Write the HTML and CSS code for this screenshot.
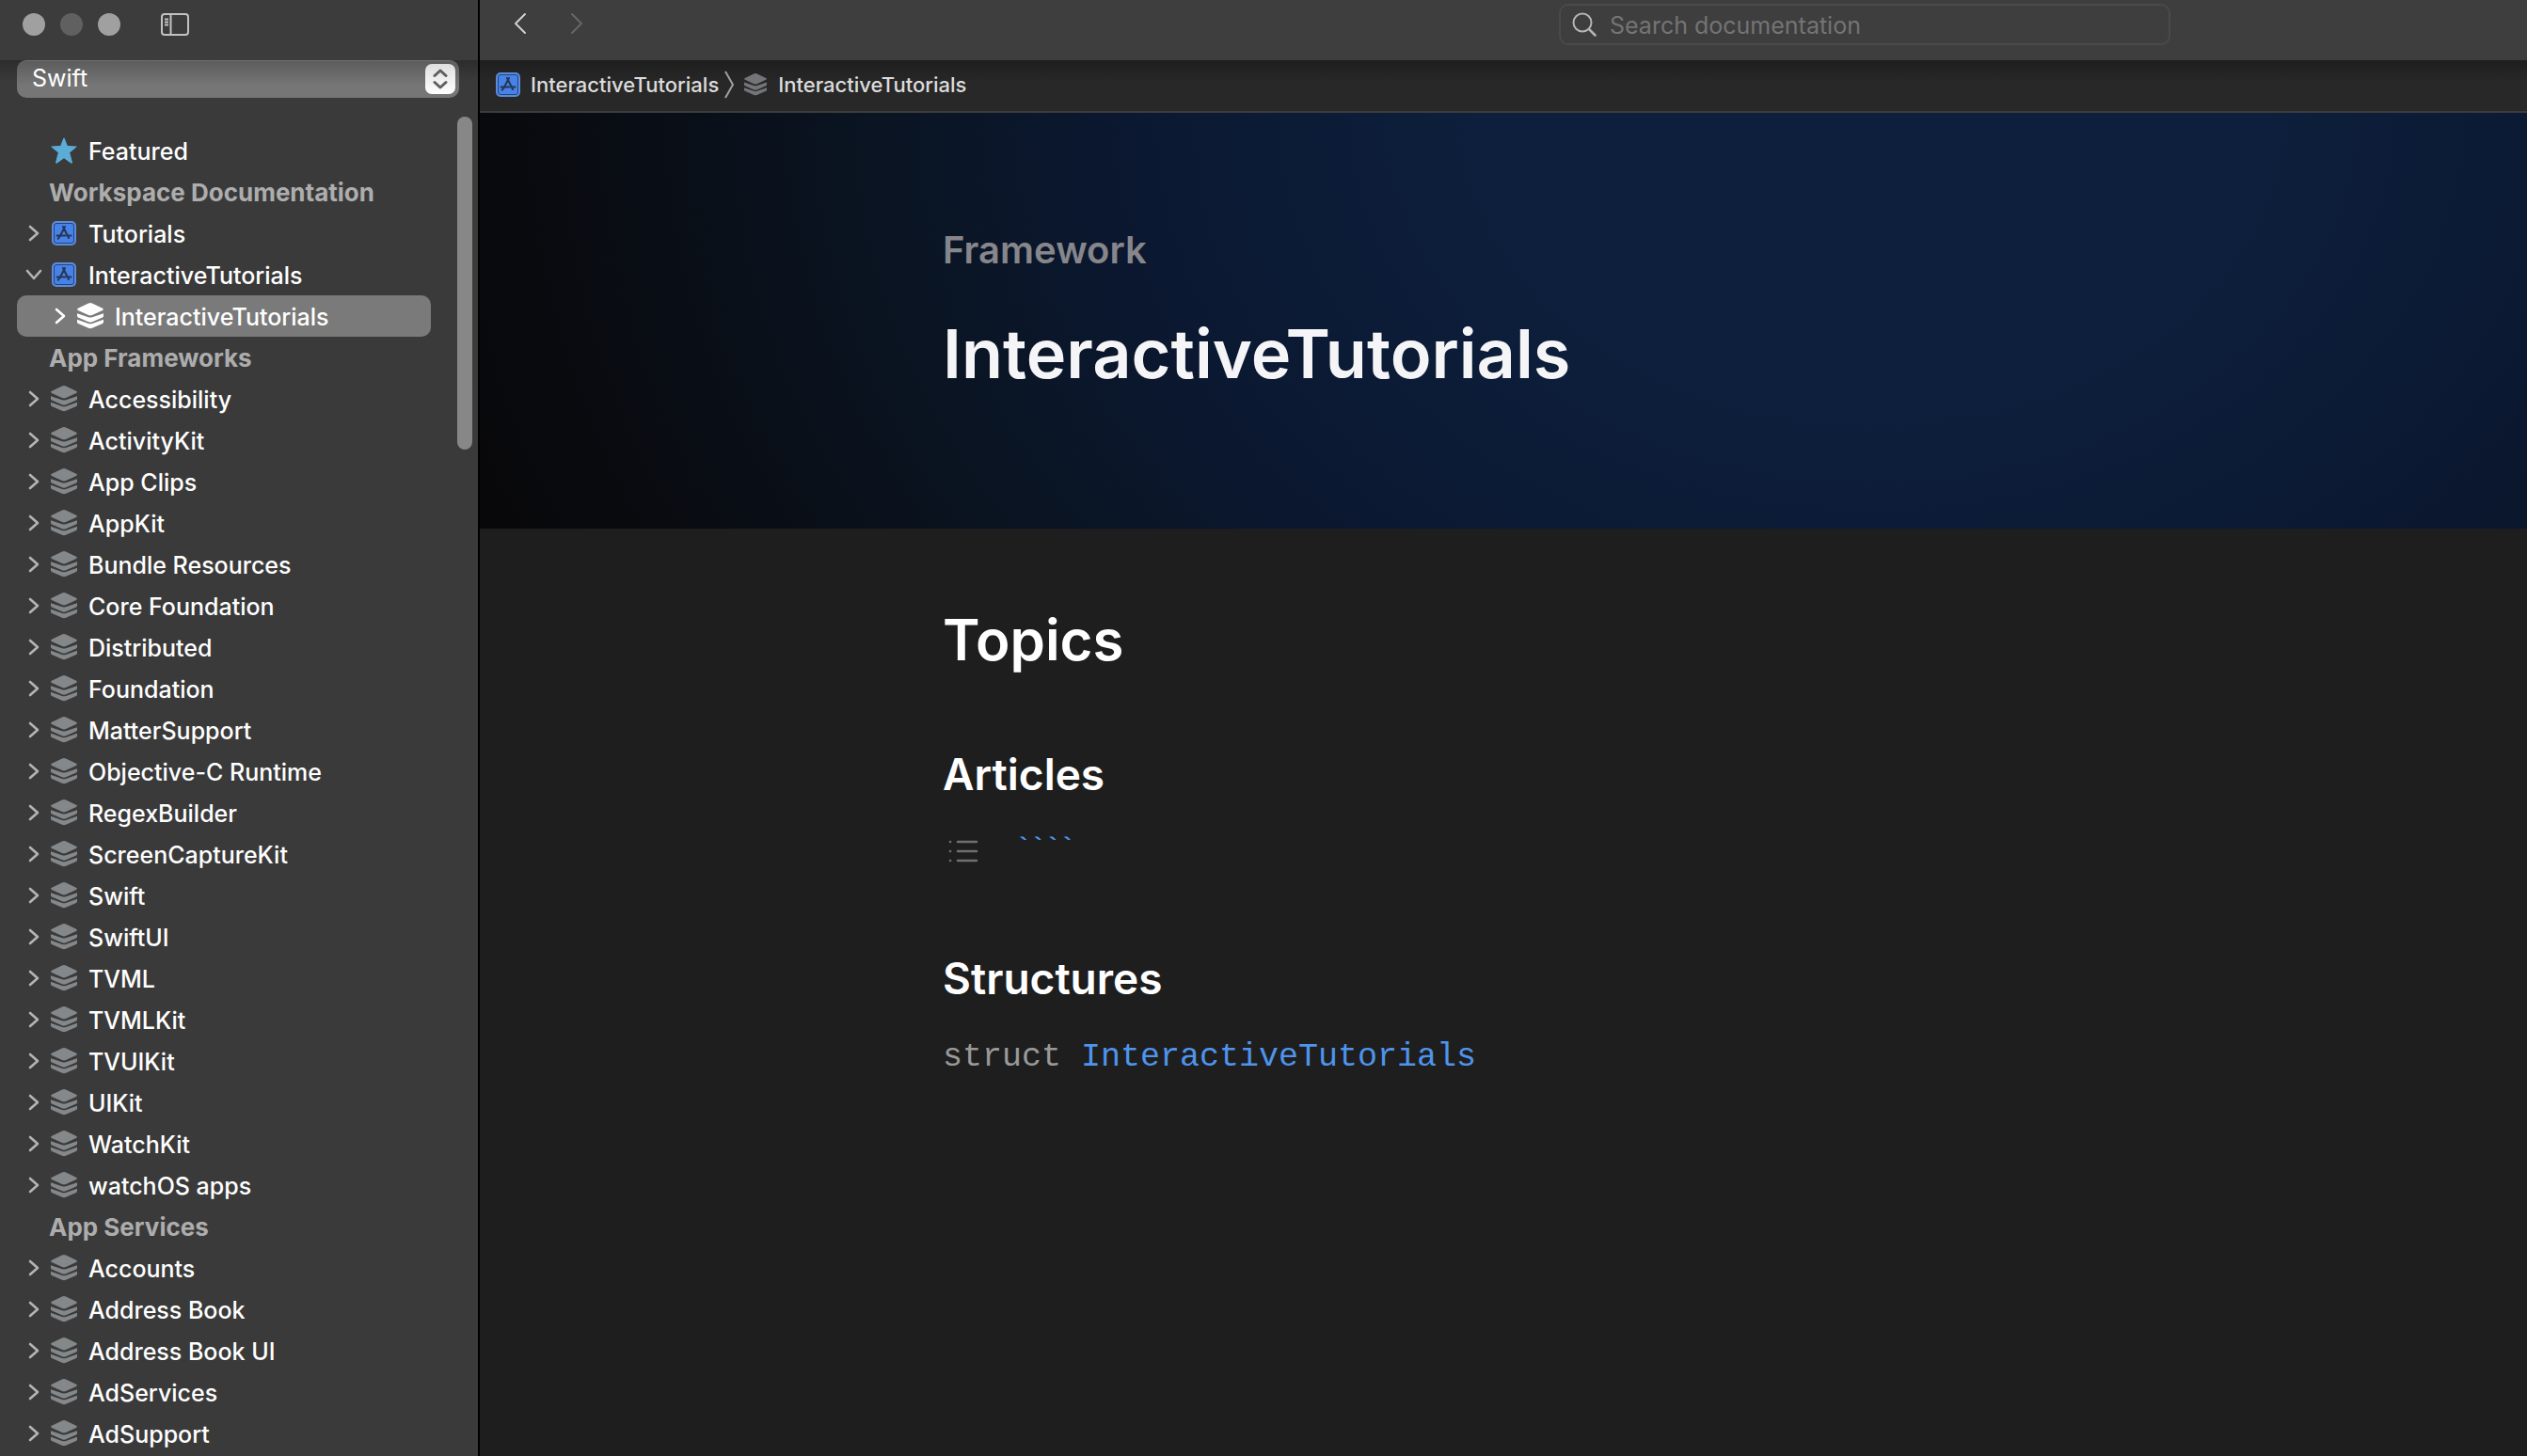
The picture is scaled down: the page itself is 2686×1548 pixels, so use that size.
FILE: index.html
```html
<!DOCTYPE html>
<html lang="en">
<head>
<meta charset="utf-8">
<title>InteractiveTutorials</title>
<link rel="stylesheet" href="styles.css">
</head>
<body>
<svg class="sprite" aria-hidden="true">
  <symbol id="chevron" viewBox="0 0 12 18"><path d="M2 2l8 7-8 7" fill="none" stroke="currentColor" stroke-width="2.600" stroke-linecap="round" stroke-linejoin="round"/></symbol>
  <symbol id="chevron-down" viewBox="0 0 18 12"><path d="M2 2l7 8 7-8" fill="none" stroke="currentColor" stroke-width="2.600" stroke-linecap="round" stroke-linejoin="round"/></symbol>
  <symbol id="stack" viewBox="0 0 28 28"><path d="M14 0q1 0 2 .5l11 5.200q1.800 1 0 2.200l-11 5.200q-2 .9-4 0L1 7.900q-1.800-1.200 0-2.200L12 .5q1-.5 2-.5z" fill="currentColor"/><path d="M0 11.200l12 4q2 .7 4 0l12-4v2.900q0 1-1 1.400l-11 4.800q-2 .8-4 0L1 15.500q-1-.4-1-1.400zM0 17.700l12 4.200q2 .7 4 0l12-4.200v2.900q0 1-1 1.400l-11 4.800q-2 .8-4 0L1 22q-1-.4-1-1.400z" fill="currentColor"/></symbol>
  <symbol id="app" viewBox="0 0 26 26"><rect x="1" y="1" width="24" height="24" rx="4" fill="#4782e8" stroke="#5d8bdc" stroke-width="2"/><rect x="2.500" y="2.500" width="21" height="21" rx="2.500" fill="#4782e8" stroke="#24437c" stroke-width="1"/><path d="M14 6L8.500 16.500M12 6l6 12M5.500 15.500h9M17.500 15.500h3M7.500 17.500l-.7 1.300" fill="none" stroke="#263653" stroke-width="2" stroke-linecap="round"/></symbol>
</svg>
<div class="window">
  <aside class="sidebar">
    <div class="titlebar">
      <div class="lights"><button class="light" aria-label="Close"></button><button class="light light-off" aria-label="Minimize"></button><button class="light" aria-label="Zoom"></button></div>
      <button class="plain" aria-label="Toggle sidebar"><svg width="30" height="24" viewBox="0 0 30 24" fill="none" stroke="#c2c2c2" stroke-width="2"><rect x="1" y="1" width="28" height="22" rx="3"/><path d="M10.500 1v22M4 6.500h4M4 9.500h4M4 12.500h4"/></svg></button>
    </div>
    <div class="filter">
      <select class="language" aria-label="Language"><option>Swift</option></select>
      <span class="stepper"><svg width="16" height="24" viewBox="0 0 16 24" fill="none" stroke="#5f5f5f" stroke-width="3" stroke-linecap="round" stroke-linejoin="round"><path d="M2 8.500L8 3l6 5.500M2 15.500L8 21l6-5.500"/></svg></span>
    </div>
    <nav class="tree" aria-label="Documentation">
      <div class="row"><span class="toggle"></span><svg class="icon" viewBox="0 0 28 28"><path d="M14 .8l3.500 8.700 9.700.5-7.500 6.200 2.700 10.300q.2 1.200-.8.700L14 21.700l-7.600 5.500q-1 .5-.8-.7l2.700-10.300L.8 10l9.700-.5z" fill="#5badd8" stroke="#5badd8" stroke-linejoin="round"/></svg><a href="#">Featured</a></div>
      <h2 class="group">Workspace Documentation</h2>
      <div class="row"><button class="toggle" aria-label="Expand"><svg class="chev"><use href="#chevron"/></svg></button><svg class="icon app"><use href="#app"/></svg><a href="#">Tutorials</a></div>
      <div class="row"><button class="toggle" aria-label="Collapse"><svg class="chev-down"><use href="#chevron-down"/></svg></button><svg class="icon app"><use href="#app"/></svg><a href="#">InteractiveTutorials</a></div>
      <div class="row selected"><button class="toggle" aria-label="Expand"><svg class="chev"><use href="#chevron"/></svg></button><svg class="icon"><use href="#stack"/></svg><a href="#">InteractiveTutorials</a></div>
      <h2 class="group">App Frameworks</h2>
      <div class="row"><button class="toggle" aria-label="Expand"><svg class="chev"><use href="#chevron"/></svg></button><svg class="icon"><use href="#stack"/></svg><a href="#">Accessibility</a></div>
      <div class="row"><button class="toggle" aria-label="Expand"><svg class="chev"><use href="#chevron"/></svg></button><svg class="icon"><use href="#stack"/></svg><a href="#">ActivityKit</a></div>
      <div class="row"><button class="toggle" aria-label="Expand"><svg class="chev"><use href="#chevron"/></svg></button><svg class="icon"><use href="#stack"/></svg><a href="#">App Clips</a></div>
      <div class="row"><button class="toggle" aria-label="Expand"><svg class="chev"><use href="#chevron"/></svg></button><svg class="icon"><use href="#stack"/></svg><a href="#">AppKit</a></div>
      <div class="row"><button class="toggle" aria-label="Expand"><svg class="chev"><use href="#chevron"/></svg></button><svg class="icon"><use href="#stack"/></svg><a href="#">Bundle Resources</a></div>
      <div class="row"><button class="toggle" aria-label="Expand"><svg class="chev"><use href="#chevron"/></svg></button><svg class="icon"><use href="#stack"/></svg><a href="#">Core Foundation</a></div>
      <div class="row"><button class="toggle" aria-label="Expand"><svg class="chev"><use href="#chevron"/></svg></button><svg class="icon"><use href="#stack"/></svg><a href="#">Distributed</a></div>
      <div class="row"><button class="toggle" aria-label="Expand"><svg class="chev"><use href="#chevron"/></svg></button><svg class="icon"><use href="#stack"/></svg><a href="#">Foundation</a></div>
      <div class="row"><button class="toggle" aria-label="Expand"><svg class="chev"><use href="#chevron"/></svg></button><svg class="icon"><use href="#stack"/></svg><a href="#">MatterSupport</a></div>
      <div class="row"><button class="toggle" aria-label="Expand"><svg class="chev"><use href="#chevron"/></svg></button><svg class="icon"><use href="#stack"/></svg><a href="#">Objective-C Runtime</a></div>
      <div class="row"><button class="toggle" aria-label="Expand"><svg class="chev"><use href="#chevron"/></svg></button><svg class="icon"><use href="#stack"/></svg><a href="#">RegexBuilder</a></div>
      <div class="row"><button class="toggle" aria-label="Expand"><svg class="chev"><use href="#chevron"/></svg></button><svg class="icon"><use href="#stack"/></svg><a href="#">ScreenCaptureKit</a></div>
      <div class="row"><button class="toggle" aria-label="Expand"><svg class="chev"><use href="#chevron"/></svg></button><svg class="icon"><use href="#stack"/></svg><a href="#">Swift</a></div>
      <div class="row"><button class="toggle" aria-label="Expand"><svg class="chev"><use href="#chevron"/></svg></button><svg class="icon"><use href="#stack"/></svg><a href="#">SwiftUI</a></div>
      <div class="row"><button class="toggle" aria-label="Expand"><svg class="chev"><use href="#chevron"/></svg></button><svg class="icon"><use href="#stack"/></svg><a href="#">TVML</a></div>
      <div class="row"><button class="toggle" aria-label="Expand"><svg class="chev"><use href="#chevron"/></svg></button><svg class="icon"><use href="#stack"/></svg><a href="#">TVMLKit</a></div>
      <div class="row"><button class="toggle" aria-label="Expand"><svg class="chev"><use href="#chevron"/></svg></button><svg class="icon"><use href="#stack"/></svg><a href="#">TVUIKit</a></div>
      <div class="row"><button class="toggle" aria-label="Expand"><svg class="chev"><use href="#chevron"/></svg></button><svg class="icon"><use href="#stack"/></svg><a href="#">UIKit</a></div>
      <div class="row"><button class="toggle" aria-label="Expand"><svg class="chev"><use href="#chevron"/></svg></button><svg class="icon"><use href="#stack"/></svg><a href="#">WatchKit</a></div>
      <div class="row"><button class="toggle" aria-label="Expand"><svg class="chev"><use href="#chevron"/></svg></button><svg class="icon"><use href="#stack"/></svg><a href="#">watchOS apps</a></div>
      <h2 class="group">App Services</h2>
      <div class="row"><button class="toggle" aria-label="Expand"><svg class="chev"><use href="#chevron"/></svg></button><svg class="icon"><use href="#stack"/></svg><a href="#">Accounts</a></div>
      <div class="row"><button class="toggle" aria-label="Expand"><svg class="chev"><use href="#chevron"/></svg></button><svg class="icon"><use href="#stack"/></svg><a href="#">Address Book</a></div>
      <div class="row"><button class="toggle" aria-label="Expand"><svg class="chev"><use href="#chevron"/></svg></button><svg class="icon"><use href="#stack"/></svg><a href="#">Address Book UI</a></div>
      <div class="row"><button class="toggle" aria-label="Expand"><svg class="chev"><use href="#chevron"/></svg></button><svg class="icon"><use href="#stack"/></svg><a href="#">AdServices</a></div>
      <div class="row"><button class="toggle" aria-label="Expand"><svg class="chev"><use href="#chevron"/></svg></button><svg class="icon"><use href="#stack"/></svg><a href="#">AdSupport</a></div>
    </nav>
    <div class="scrollbar"></div>
  </aside>
  <main class="main">
    <header class="toolbar">
      <div class="history">
        <button class="plain" aria-label="Back"><svg width="14" height="24" viewBox="0 0 14 24" fill="none" stroke="#d0d0d0" stroke-width="2" stroke-linecap="round" stroke-linejoin="round"><path d="M12 2L2 12l10 10"/></svg></button>
        <button class="plain" aria-label="Forward"><svg width="14" height="24" viewBox="0 0 14 24" fill="none" stroke="#666" stroke-width="2" stroke-linecap="round" stroke-linejoin="round"><path d="M2 2l10 10L2 22"/></svg></button>
      </div>
      <label class="search"><svg width="26" height="26" viewBox="0 0 26 26" fill="none" stroke="#b4b4b4" stroke-width="2" stroke-linecap="round"><circle cx="11" cy="11" r="9.500"/><path d="M18 18l6.500 6.500" stroke-width="2.500"/></svg><input type="search" placeholder="Search documentation" aria-label="Search documentation"></label>
    </header>
    <nav class="crumbs" aria-label="Breadcrumb">
      <svg class="crumb-app"><use href="#app"/></svg><a href="#">InteractiveTutorials</a>
      <svg class="crumb-sep" width="12" height="30" viewBox="0 0 12 30" fill="none" stroke="#a0a0a0" stroke-width="2"><path d="M2 1l8 14-8 14"/></svg>
      <svg class="crumb-stack"><use href="#stack"/></svg><a href="#">InteractiveTutorials</a>
    </nav>
    <section class="hero">
      <p class="eyebrow">Framework</p>
      <h1 class="title">InteractiveTutorials</h1>
    </section>
    <section class="topics">
      <h2>Topics</h2>
      <h3>Articles</h3>
      <div class="article"><svg width="32" height="24" viewBox="0 0 32 24" stroke="#707070" stroke-width="2.500" stroke-linecap="round"><path d="M2 2h.1M2 12h.1M2 22h.1M10 2h20M10 12h20M10 22h20"/></svg><a href="#">````</a></div>
      <h3>Structures</h3>
      <code class="declaration">struct <a href="#">InteractiveTutorials</a></code>
    </section>
  </main>
</div>
</body>
</html>
```
FILE: styles.css
```css
* { box-sizing: border-box; }
body { margin: 0; background: #1e1e1e; color: #fff; font-family: Inter, "Liberation Sans", sans-serif; font-size: 25px; }
h1, h2, h3, p { margin: 0; }
a { color: inherit; text-decoration: none; }
button { padding: 0; border: 0; background: none; color: inherit; font: inherit; display: flex; }
.sprite { position: absolute; width: 0; height: 0; }
.window { display: grid; grid-template-columns: 510px 1fr; height: 100vh; overflow: hidden; }

.sidebar { position: relative; background: #3a3a3a; border-right: 2px solid #000; overflow: hidden; }
.titlebar { height: 64px; padding: 0 24px 12px; display: flex; align-items: center; gap: 43px; background: #3c3c3c; }
.lights { display: flex; gap: 16px; }
.light { width: 24px; height: 24px; border-radius: 50%; background: #a0a0a0; }
.light-off { background: #606060; }
.filter { position: relative; padding: 0 20px 34px 18px; background: linear-gradient(#2c2c2c, #3a3a3a 22px); }
.language { display: block; appearance: none; width: 100%; height: 40px; padding: 0 16px 4px; border: 0; border-top: 1px solid #707070; border-radius: 10px; background: linear-gradient(#5c5c5c, #767676 26px); color: #fff; font: inherit; }
.stepper { position: absolute; top: 4px; right: 24px; width: 32px; height: 32px; border-radius: 7px; background: linear-gradient(#dedede, #fff); display: flex; align-items: center; justify-content: center; pointer-events: none; }
.tree { padding: 0 50px 0 18px; font-weight: 500; }
.row { height: 44px; padding-left: 9px; display: flex; align-items: center; border-radius: 10px; line-height: 30px; }
.row a { padding-top: 2px; white-space: nowrap; }
.toggle { width: 18px; margin-right: 9px; justify-content: center; flex: none; color: #b4b4b4; }
.chev { width: 12px; height: 18px; }
.chev-down { width: 18px; height: 12px; }
.icon { flex: none; width: 28px; height: 28px; margin-right: 12px; color: #85888a; }
.app { width: 26px; height: 26px; margin: 0 13px 0 1px; }
.selected { padding-left: 37px; background: #7a7a7a; }
.selected .icon, .selected .toggle { color: #fff; }
.group { height: 44px; padding: 1px 0 0 34px; font-size: 26px; line-height: 44px; font-weight: 700; color: #adadad; white-space: nowrap; }
.scrollbar { position: absolute; top: 124px; right: 6px; width: 16px; height: 354px; border-radius: 8px; background: #878787; }

.main { min-width: 0; }
.toolbar { height: 64px; padding: 4px 36px; display: grid; grid-template-columns: 1fr 650px 343px; background: #3e3e3e; }
.history { display: flex; gap: 46px; padding-top: 9px; }
.search { height: 44px; padding: 0 12px; display: flex; align-items: center; gap: 14px; border: 2px solid #4a4a4a; border-radius: 10px; }
.search input { flex: 1; min-width: 0; padding: 2px 0 0; border: 0; outline: 0; background: none; color: #fff; font: inherit; }
.search input::placeholder { color: #747474; opacity: 1; }
.crumbs { height: 56px; padding: 0 17px 2px; display: flex; align-items: center; border-bottom: 2px solid #3c3c3c; background: linear-gradient(#1e1e1e, #282828 24px); color: #dcdcdc; font-size: 22px; font-weight: 500; }
.crumb-app { width: 26px; height: 26px; margin-right: 11px; }
.crumb-sep { margin: 0 10px 0 5px; }
.crumb-stack { width: 24px; height: 24px; margin-right: 12px; color: #737578; }
.hero { height: 442px; padding: 122px 0 0 492px; background: radial-gradient(72% 270% at 68% 0, #0d1f3c 27%, #0b1831 50%, #0a1422 68%, #090b10 90%, #08080a 100%); }
.eyebrow { font-size: 40px; line-height: 48px; font-weight: 600; color: #86868b; }
.title { margin-top: 40px; font-size: 72px; line-height: 92px; font-weight: 600; color: #f5f5f7; }
.topics { padding: 80px 0 0 492px; }
.topics h2 { font-size: 60px; line-height: 76px; font-weight: 600; }
.topics h3 { margin-top: 77px; font-size: 46px; line-height: 56px; font-weight: 600; }
.article { margin-top: 24px; height: 60px; padding-left: 6px; display: flex; align-items: center; gap: 40px; color: #4f94ec; font-family: "Liberation Mono", monospace; font-size: 26px; font-weight: 700; }
.article a { padding-bottom: 8px; }
.declaration { display: block; margin-top: 34px; font-family: "Liberation Mono", monospace; font-size: 35px; line-height: 44px; color: #999; }
.declaration a { color: #4f94ec; }
```
